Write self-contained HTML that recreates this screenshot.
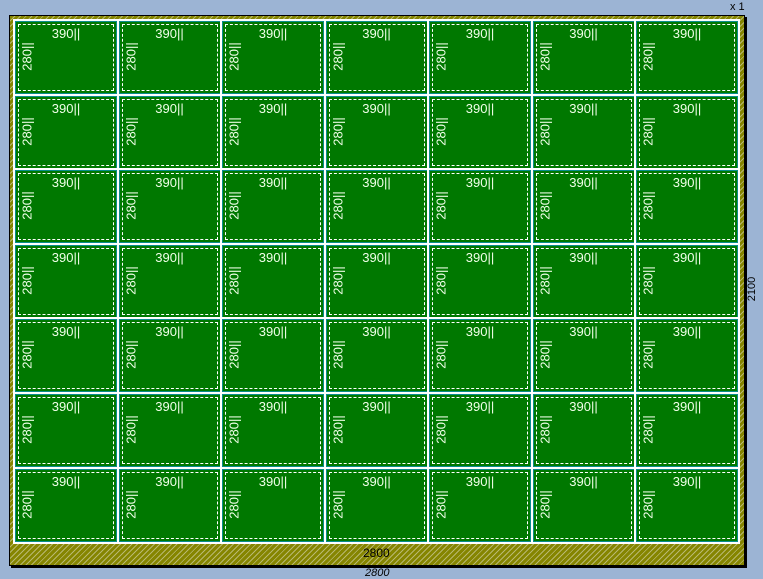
<!DOCTYPE html><html><head><style>
body{margin:0;width:763px;height:579px;background:#9cb4d4;position:relative;overflow:hidden;font-family:"Liberation Sans",sans-serif}
#sheet{position:absolute;left:9px;top:15px;width:734px;height:549px;border:1px solid #000;box-shadow:2px 2px 0 #000;
background:repeating-linear-gradient(135deg,#858500 0 3px,#b8b870 3px 4px);background-color:#858500}
.p{position:absolute;background:#007800;border:1px solid #0a8c8c;box-sizing:border-box;outline:2px solid #fff}
.p:after{content:"";position:absolute;left:2px;top:2px;right:2px;bottom:2px;border:1px dashed #fff}
.t{position:absolute;top:4px;left:0;right:0;text-align:center;color:#f0ffe8;font-size:13px}
.v{position:absolute;left:-4px;top:27px;width:30px;text-align:center;color:#f0ffe8;font-size:13px;transform:rotate(-90deg);white-space:nowrap}
</style></head><body>
<div style="position:absolute;left:730px;top:1px;font-size:11px">x 1</div>
<div id="sheet"></div>
<div style="position:absolute;left:363px;top:546px;font-size:12px">2800</div>
<div style="position:absolute;left:365px;top:567px;font-size:11px;font-style:italic">2800</div>
<div style="position:absolute;left:740px;top:283px;font-size:11px;transform:rotate(-90deg)">2100</div>
<div id="g"></div>
<script>
var h='';for(var r=0;r<7;r++)for(var c=0;c<7;c++){var x=15+c*103.5,y=21+r*74.6;
h+='<div class="p" style="left:'+x.toFixed(1)+'px;top:'+y.toFixed(1)+'px;width:102px;height:73px"><div class="t">390||</div><div class="v">280||</div></div>';}
document.getElementById('g').innerHTML=h;
</script>
</body></html>
